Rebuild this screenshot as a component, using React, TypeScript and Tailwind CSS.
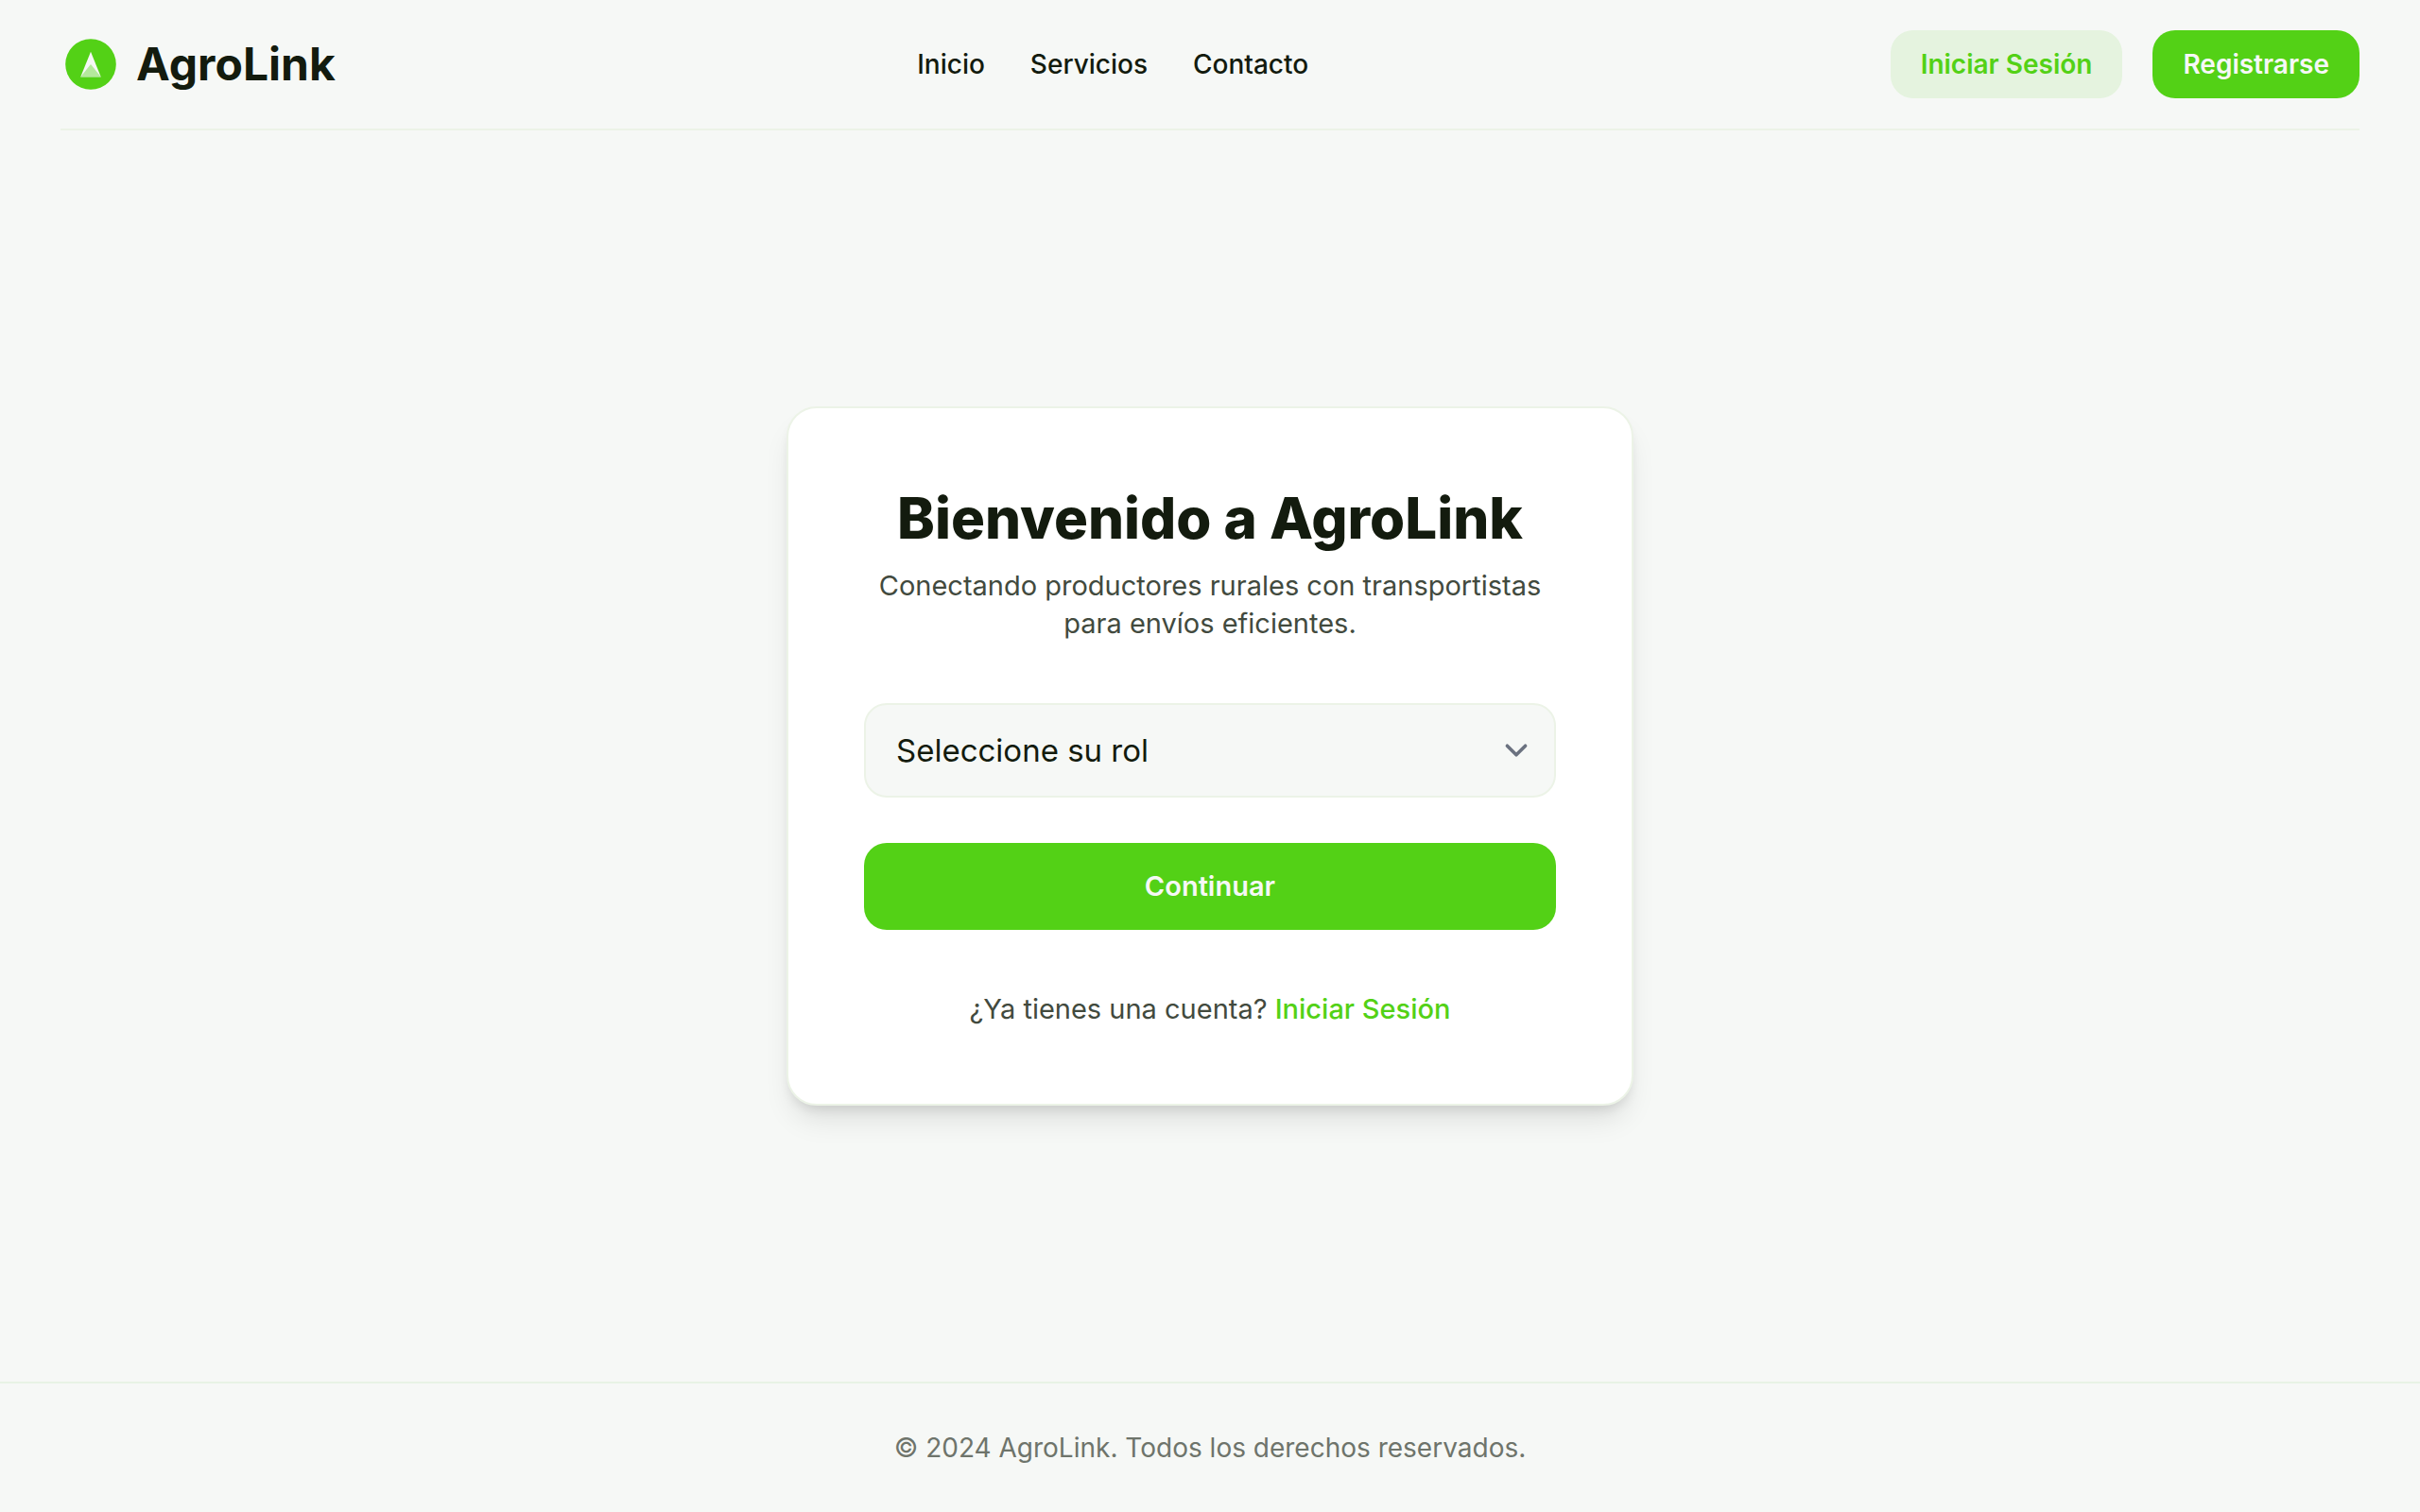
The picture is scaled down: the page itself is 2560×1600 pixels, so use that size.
import { useState } from 'react'

const links = ['Inicio', 'Servicios', 'Contacto']

function Logo() {
  return (
    <svg className="size-16" viewBox="0 0 64 64" fill="none" aria-hidden="true">
      <circle cx="32" cy="32" r="26.8" fill="#53d116" />
      <path d="M32 18.7 42.7 45.3H21.3Z" fill="#f6f8f6" />
      <path d="M32 32 42.7 45.3H21.3Z" fill="#53d116" fillOpacity="0.4" />
      <path d="M21.3 45.3H42.7V46H21.3Z" fill="#f6f8f6" fillOpacity="0.4" />
    </svg>
  )
}

export default function App() {
  const [role, setRole] = useState('')

  return (
    <div className="flex min-h-screen flex-col bg-[#f6f8f6] font-['Inter','Noto_Sans',sans-serif] text-[28px] leading-10 text-[#131b0e]">
      <header className="mx-16 flex items-center justify-between border-b-2 border-[#ecf3e7] py-8">
        <a href="#" className="flex items-center gap-4">
          <Logo />
          <span className="text-5xl leading-16 font-bold">AgroLink</span>
        </a>
        <nav className="flex items-center gap-12 font-medium">
          {links.map((link) => (
            <a key={link} href="#">{link}</a>
          ))}
        </nav>
        <div className="flex items-center gap-8 font-semibold">
          <button type="button" className="rounded-3xl bg-[#53d116]/10 px-8 py-4 text-[#53d116]">Iniciar Sesión</button>
          <button type="button" className="rounded-3xl bg-[#53d116] px-8 py-4 text-[#f6f8f6]">Registrarse</button>
        </div>
      </header>

      <main className="flex flex-1 items-center justify-center">
        <section className="w-full max-w-4xl rounded-4xl border-2 border-[#ecf3e7] bg-white p-20 text-center text-[29px] leading-10 shadow-[0_20px_30px_-6px_rgb(0_0_0/0.1),0_8px_12px_-4px_rgb(0_0_0/0.1)]">
          <h1 className="text-6xl leading-18 font-extrabold">Bienvenido a AgroLink</h1>
          <p className="mt-4 text-[#424a3e]">
            Conectando productores rurales con transportistas para envíos eficientes.
          </p>
          <form className="mt-16 flex flex-col gap-12" onSubmit={(e) => e.preventDefault()}>
            <div className="relative">
              <select
                aria-label="Seleccione su rol"
                value={role}
                onChange={(e) => setRole(e.target.value)}
                className="block w-full appearance-none rounded-3xl border-2 border-[#ecf3e7] bg-[#f6f8f6] py-6 pr-20 pl-8 text-[33px] leading-12"
              >
                <option value="">Seleccione su rol</option>
                <option value="productor">Productor</option>
                <option value="transportista">Transportista</option>
              </select>
              <svg className="pointer-events-none absolute inset-y-0 right-[18px] my-auto size-12" viewBox="0 0 20 20" fill="none" stroke="#6b7280" strokeWidth="1.5" strokeLinecap="round" strokeLinejoin="round" aria-hidden="true">
                <path d="m6 8 4 4 4-4" />
              </svg>
            </div>
            <button type="submit" className="rounded-3xl bg-[#53d116] py-[26px] font-semibold text-[#f6f8f6]">Continuar</button>
          </form>
          <p className="mt-16 text-[#424a3e]">
            ¿Ya tienes una cuenta? <a href="#" className="font-medium text-[#53d116]">Iniciar Sesión</a>
          </p>
        </section>
      </main>

      <footer className="border-t-2 border-[#e8f3e5] py-12 text-center text-[#6e746b]">
        © 2024 AgroLink. Todos los derechos reservados.
      </footer>
    </div>
  )
}
